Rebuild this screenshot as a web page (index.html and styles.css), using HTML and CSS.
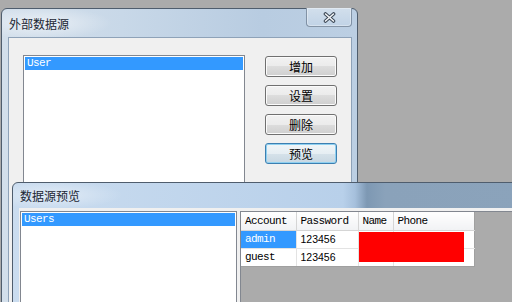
FILE: index.html
```html
<!DOCTYPE html>
<html lang="zh-CN">
<head>
    <meta charset="UTF-8">
    <meta name="viewport" content="width=device-width, initial-scale=1.0">
    <title>外部数据源</title>
    <link rel="stylesheet" href="styles.css">
</head>
<body>
    <div class="desktop">
        <!-- 外部数据源 窗口 -->
        <div class="win win-main">
            <div class="titlebar">
                <span class="title">外部数据源</span>
                <div class="close-btn">
                    <svg width="13" height="11" viewBox="0 0 13 11">
                        <path d="M2.5 2 L10.5 9 M10.5 2 L2.5 9" stroke="#3a4654" stroke-width="3.6" stroke-linecap="round"/>
                        <path d="M2.5 2 L10.5 9 M10.5 2 L2.5 9" stroke="#f4f6f8" stroke-width="1.6" stroke-linecap="round"/>
                    </svg>
                </div>
            </div>
            <div class="client main-client">
                <div class="listbox main-list">
                    <div class="list-item selected">User</div>
                </div>
                <div class="btn-col">
                    <button class="btn">增加</button>
                    <button class="btn">设置</button>
                    <button class="btn">删除</button>
                    <button class="btn btn-default">预览</button>
                </div>
            </div>
        </div>

        <!-- 数据源预览 窗口 -->
        <div class="win win-preview">
            <div class="titlebar">
                <span class="title">数据源预览</span>
            </div>
            <div class="client preview-client">
                <div class="listbox preview-list">
                    <div class="list-item selected">Users</div>
                </div>
                <div class="grid-wrap">
                    <table class="grid">
                        <tr>
                            <th class="col-account">Account</th>
                            <th class="col-password">Password</th>
                            <th class="col-name">Name</th>
                            <th class="col-phone">Phone</th>
                        </tr>
                        <tr>
                            <td class="cell-selected">admin</td>
                            <td class="num">123456</td>
                            <td></td>
                            <td></td>
                        </tr>
                        <tr>
                            <td>guest</td>
                            <td class="num">123456</td>
                            <td></td>
                            <td></td>
                        </tr>
                    </table>
                    <div class="cell-overlay"></div>
                </div>
            </div>
        </div>
    </div>
</body>
</html>
```

FILE: styles.css
```css
/* 基本样式 */
body {
    margin: 0;
    font-family: "Noto Sans CJK SC", "Liberation Sans", sans-serif;
    font-size: 12px;
    color: #000;
    background-color: #ababab;
}

.desktop {
    position: relative;
    width: 512px;
    height: 302px;
    overflow: hidden;
}

/* 窗口框架 */
.win {
    position: absolute;
    box-sizing: border-box;
    display: flex;
    flex-direction: column;
    border: 1px solid #4f5d6d;
    border-radius: 6px 6px 0 0;
}

.win-main {
    left: 1px;
    top: 8px;
    width: 357px;
    height: 330px;
    padding: 0 5px 0 6px;
    background:
        radial-gradient(ellipse 70px 16px at 40px 14px, rgba(255, 255, 255, 0.55), rgba(255, 255, 255, 0)),
        linear-gradient(to right, #d3dfeb 0, #c8d8e8 120px, #b8cce1 260px, #bccfe3 100%);
}

.win-preview {
    left: 12px;
    top: 182px;
    width: 520px;
    height: 140px;
    padding: 0 0 0 6px;
    background:
        radial-gradient(ellipse 70px 14px at 40px 12px, rgba(255, 255, 255, 0.45), rgba(255, 255, 255, 0)),
        linear-gradient(to right, #cadcef 0, #b8d0ea 330px, #a6c0dc 342px, #7d98b3 354px, #8aa2ba 372px, #8ba3bb 100%);
}

/* 标题栏 */
.titlebar {
    display: flex;
    justify-content: space-between;
    align-items: center;
    flex-shrink: 0;
}

.win-main .titlebar {
    height: 28px;
}

.win-preview .titlebar {
    height: 25px;
}

.title {
    padding-left: 1px;
    font-size: 12px;
    color: #1b2634;
}

.close-btn {
    align-self: flex-start;
    display: flex;
    justify-content: center;
    align-items: center;
    width: 46px;
    height: 19px;
    margin-top: -1px;
    box-sizing: border-box;
    border: 1px solid rgba(70, 88, 110, 0.55);
    border-top: none;
    border-radius: 0 0 4px 4px;
    background: linear-gradient(#d2dfec, #c1d3e6);
    box-shadow: inset 0 0 0 1px rgba(255, 255, 255, 0.35);
}

/* 客户区 */
.client {
    flex: 1;
    display: flex;
    background-color: #f0f0f0;
}

.main-client {
    border: 1px solid #8ea2b8;
    border-bottom: none;
    padding: 17px 0 0 14px;
    gap: 20px;
}

.preview-client {
    padding: 3px 0 0 1px;
    gap: 3px;
}

/* 列表框 */
.listbox {
    box-sizing: border-box;
    border: 1px solid #828790;
    background-color: #fff;
    padding: 1px;
}

.main-list {
    width: 222px;
    height: 160px;
}

.preview-list {
    width: 217px;
    height: 100px;
}

.list-item {
    height: 13px;
    line-height: 13px;
    padding-left: 2px;
    font-family: "Liberation Mono", monospace;
    font-size: 11px;
    letter-spacing: -0.6px;
}

.list-item.selected {
    background-color: #3399ff;
    color: #fff;
}

/* 按钮 */
.btn-col {
    display: flex;
    flex-direction: column;
    gap: 8px;
    padding-top: 1px;
}

.btn {
    width: 72px;
    height: 21px;
    padding: 0;
    box-sizing: border-box;
    border: 1px solid #707070;
    border-radius: 3px;
    background: linear-gradient(#f2f2f2 0, #ebebeb 50%, #dddddd 50%, #cfcfcf 100%);
    box-shadow: inset 0 0 0 1px #fbfbfb;
    font-family: inherit;
    font-size: 12px;
    line-height: 17px;
    color: #000;
}

.btn-default {
    border-color: #3c7fb1;
    background: linear-gradient(#f0f5f8 0, #e6eef3 50%, #d6e2ea 50%, #c8d7e2 100%);
    box-shadow: inset 0 0 0 1px #8fd0f0;
}

/* 数据表格 */
.grid-wrap {
    position: relative;
    flex: 1;
    border-top: 1px solid #828790;
    border-left: 1px solid #828790;
    background-color: #ababab;
}

.grid {
    border-collapse: collapse;
    background-color: #fff;
    table-layout: fixed;
}

.grid th,
.grid td {
    box-sizing: border-box;
    height: 18px;
    padding: 0 0 0 4px;
    text-align: left;
    font-family: "Liberation Mono", monospace;
    font-size: 11px;
    font-weight: normal;
    letter-spacing: -0.6px;
    white-space: nowrap;
}

.grid th {
    background: linear-gradient(#ffffff, #f1f2f4);
    border-right: 1px solid #d5d5d5;
    border-bottom: 1px solid #d5d5d5;
}

.grid td {
    border-right: 1px solid #e3e3e3;
    border-bottom: 1px solid #e3e3e3;
}

.grid tr:last-child td {
    border-bottom: 1px solid #a0a0a0;
}

.grid tr td:last-child,
.grid tr th:last-child {
    border-right: 1px solid #a0a0a0;
}

.grid td.num {
    font-family: "Liberation Sans", sans-serif;
    font-size: 10.5px;
    letter-spacing: 0;
}

.grid td.cell-selected {
    background-color: #3399ff;
    color: #fff;
}

.col-account { width: 55px; }
.col-password { width: 62px; }
.col-name { width: 35px; }
.col-phone { width: 81px; }

/* 红色覆盖区域 */
.cell-overlay {
    position: absolute;
    left: 118px;
    top: 20px;
    width: 105px;
    height: 30px;
    background-color: #ff0000;
}
```
